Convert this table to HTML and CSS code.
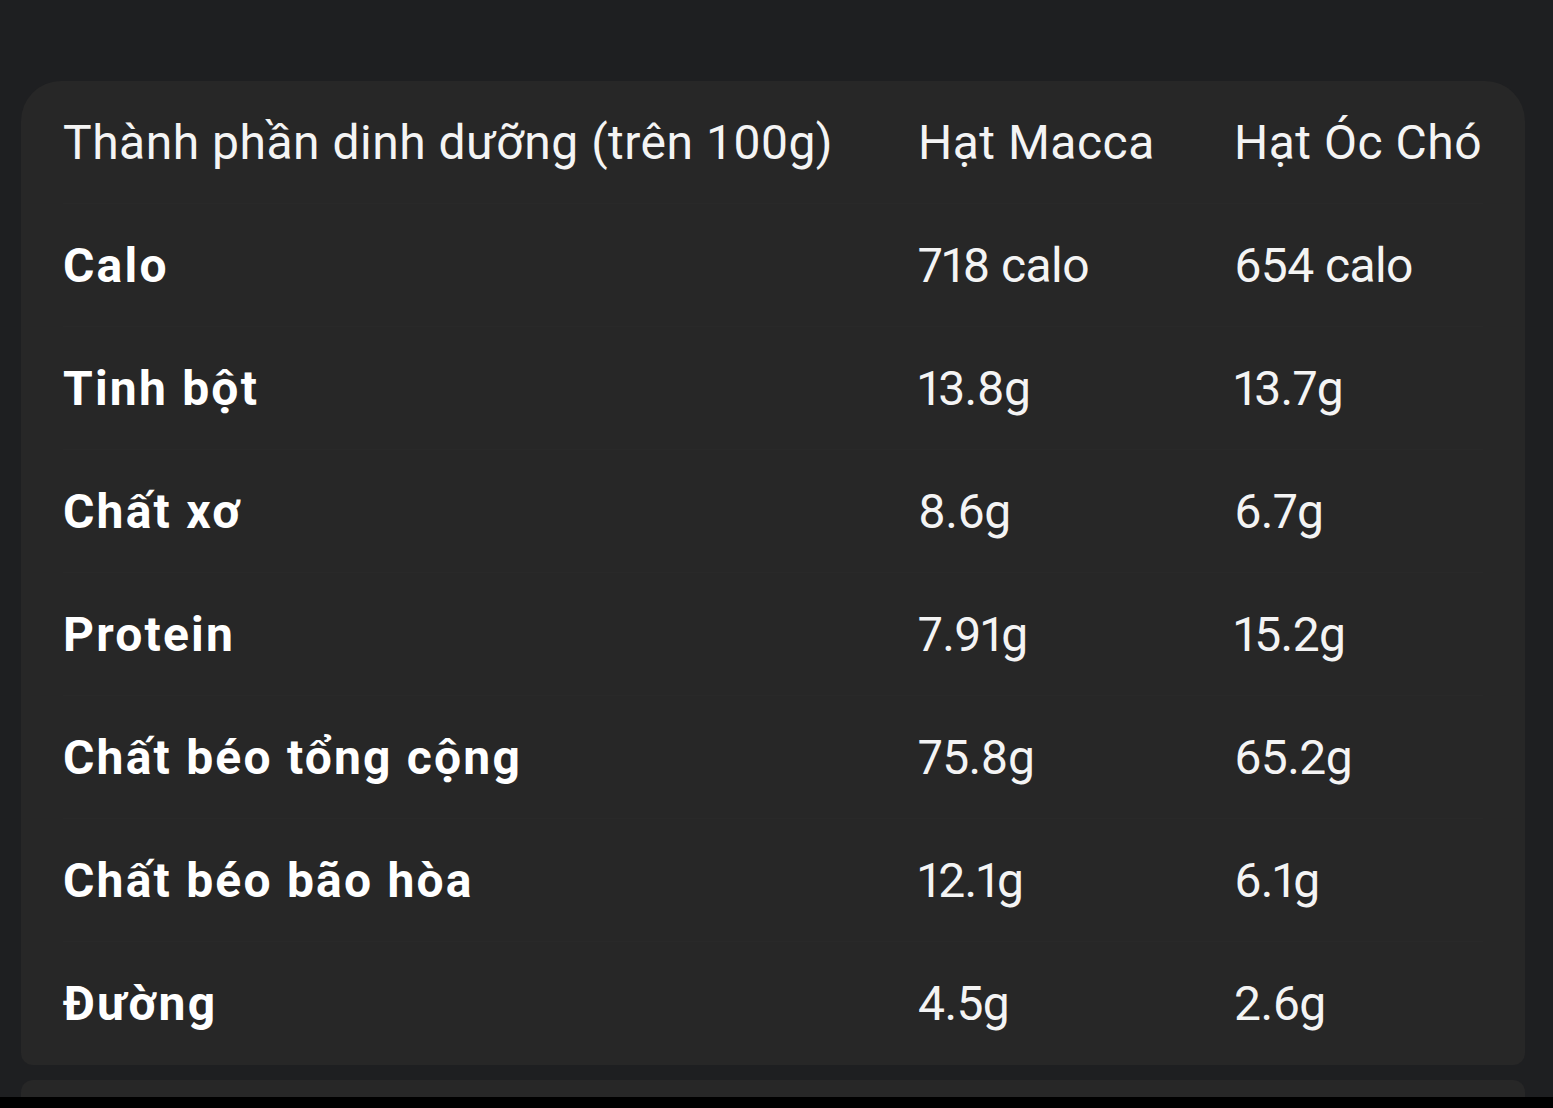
FILE: index.html
```html
<!DOCTYPE html>
<html lang="vi">
<head>
<meta charset="utf-8">
<title>Thành phần dinh dưỡng</title>
<link rel="stylesheet" href="styles.css">
</head>
<body>
<div class="page">
  <div class="top-space"></div>
  <section class="card">
    <div class="row head">
      <div class="cell name">Thành phần dinh dưỡng (trên 100g)</div>
      <div class="cell">Hạt Macca</div>
      <div class="cell">Hạt Óc Chó</div>
    </div>
    <div class="row">
      <div class="cell name strong">Calo</div>
      <div class="cell val">718 calo</div>
      <div class="cell val">654 calo</div>
    </div>
    <div class="row">
      <div class="cell name strong">Tinh bột</div>
      <div class="cell val">13.8g</div>
      <div class="cell val">13.7g</div>
    </div>
    <div class="row">
      <div class="cell name strong">Chất xơ</div>
      <div class="cell val">8.6g</div>
      <div class="cell val">6.7g</div>
    </div>
    <div class="row">
      <div class="cell name strong">Protein</div>
      <div class="cell val">7.91g</div>
      <div class="cell val">15.2g</div>
    </div>
    <div class="row">
      <div class="cell name strong">Chất béo tổng cộng</div>
      <div class="cell val">75.8g</div>
      <div class="cell val">65.2g</div>
    </div>
    <div class="row">
      <div class="cell name strong">Chất béo bão hòa</div>
      <div class="cell val">12.1g</div>
      <div class="cell val">6.1g</div>
    </div>
    <div class="row last">
      <div class="cell name strong">Đường</div>
      <div class="cell val">4.5g</div>
      <div class="cell val">2.6g</div>
    </div>
  </section>
  <section class="card next"></section>
  <div class="bottom-bar"></div>
</div>
</body>
</html>
```
FILE: styles.css
```css
html, body {
  margin: 0;
  padding: 0;
  background: #1e1f21;
  height: 100%;
  overflow: hidden;
}
.page {
  display: flex;
  flex-direction: column;
  height: 1108px;
  font-family: "Roboto", "Noto Sans", sans-serif;
  color: #f4f4f4;
}
.top-space {
  height: 81px;
  flex: none;
}
.card {
  margin-left: 21px;
  width: 1504px;
  background: #272727;
  border-radius: 40px 40px 12px 12px;
  padding: 0 42px;
  box-sizing: border-box;
  flex: none;
}
.row {
  display: grid;
  grid-template-columns: 855px 316px 1fr;
  height: 123px;
  align-items: center;
  border-bottom: 1px solid #292929;
  box-sizing: border-box;
}
.row.last {
  border-bottom: none;
}
.cell {
  font-size: 48px;
  font-weight: 400;
  white-space: nowrap;
  letter-spacing: 0.5px;
}
.cell.strong {
  font-weight: 700;
  color: #ffffff;
  letter-spacing: 2.2px;
}
.cell.val {
  font-variant-numeric: proportional-nums;
  letter-spacing: -0.6px;
}
.card.next {
  margin-top: 15px;
  height: 17px;
  border-radius: 12px 12px 0 0;
  padding: 0;
}
.bottom-bar {
  flex: 1;
  background: #000;
}
```
